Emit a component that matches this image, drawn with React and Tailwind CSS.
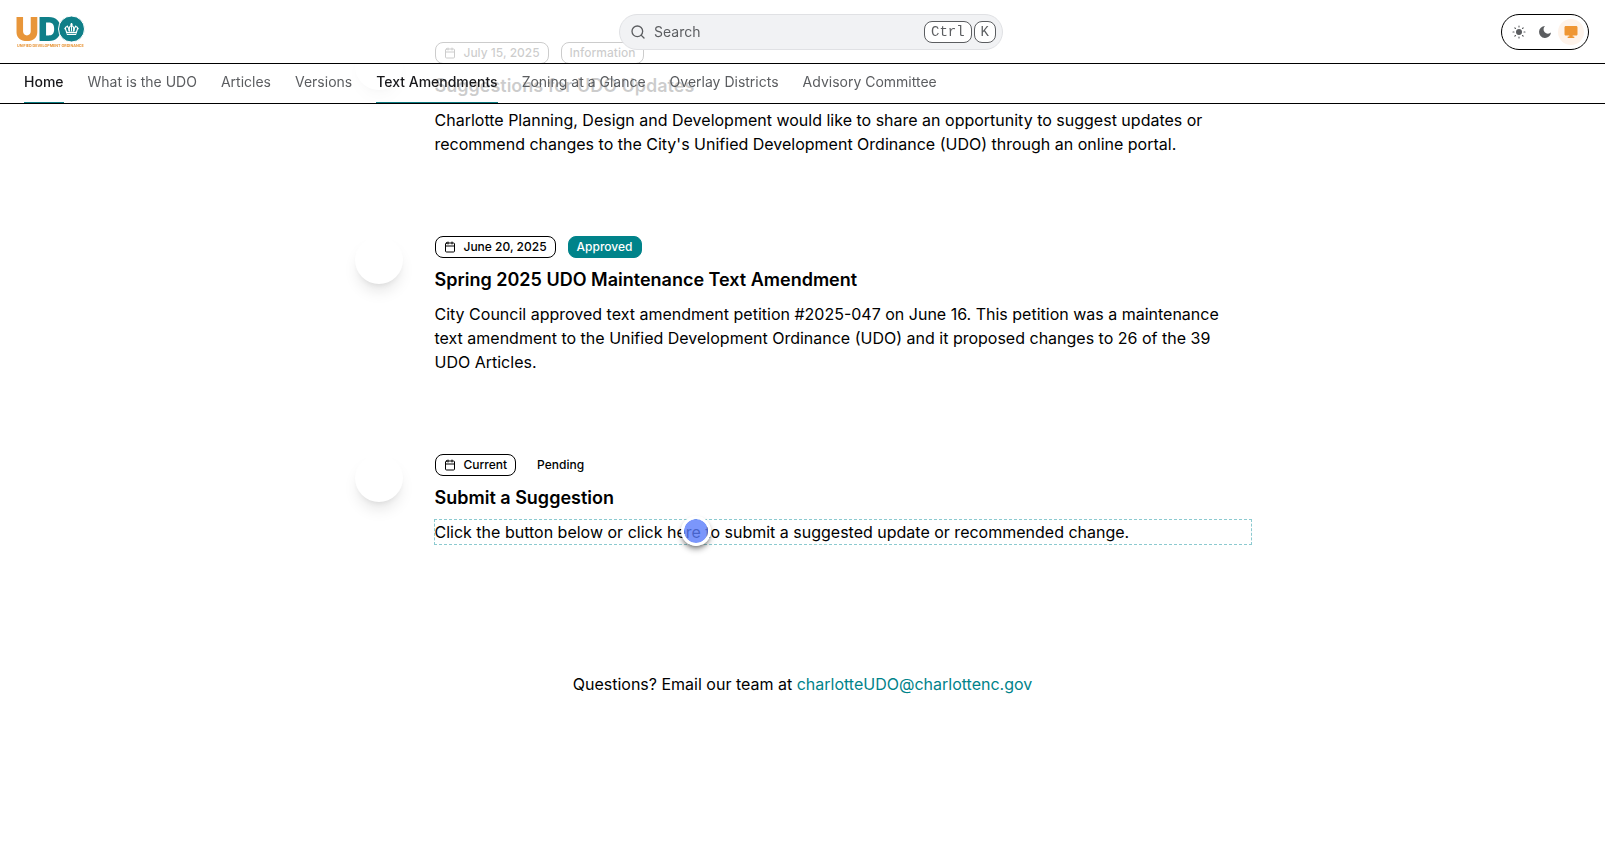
import { Calendar, Search } from "lucide-react";

const links = [
  { label: "Home", active: true },
  { label: "What is the UDO" },
  { label: "Articles" },
  { label: "Versions" },
  { label: "Text Amendments", active: true },
  { label: "Zoning at a Glance" },
  { label: "Overlay Districts" },
  { label: "Advisory Committee" },
];

const badgeStyles = {
  outline: "border-black",
  approved: "border-[#00838a] bg-[#00838a] text-white",
  plain: "border-transparent",
};

const items = [
  {
    date: "July 15, 2025",
    status: "Information",
    tone: "outline",
    title: "Suggestions for UDO Updates",
    text: "Charlotte Planning, Design and Development would like to share an opportunity to suggest updates or recommend changes to the City's Unified Development Ordinance (UDO) through an online portal.",
  },
  {
    date: "June 20, 2025",
    status: "Approved",
    tone: "approved",
    title: "Spring 2025 UDO Maintenance Text Amendment",
    text: "City Council approved text amendment petition #2025-047 on June 16. This petition was a maintenance text amendment to the Unified Development Ordinance (UDO) and it proposed changes to 26 of the 39 UDO\u00a0Articles.",
  },
  {
    date: "Current",
    status: "Pending",
    tone: "plain",
    title: "Submit a Suggestion",
    text: "Click the button below or click here to submit a suggested update or recommended change.",
    selected: true,
  },
];

function Logo() {
  return (
    <svg
      width="70"
      height="32"
      viewBox="0 0 70 32"
      role="img"
      aria-label="UDO Unified Development Ordinance"
      className="overflow-visible"
    >
      <g fontFamily="Inter, sans-serif" fontWeight="900" fontSize="33">
        <text x="-1" y="25" fill="#e8963a">U</text>
        <text x="22" y="25" fill="#0f7f88">D</text>
      </g>
      <circle cx="55.5" cy="13" r="13" fill="#0f7f88" stroke="#fff" strokeWidth="1" />
      <g fill="none" stroke="#fff" strokeWidth="1.1">
        <path d="M51 17.5 L49.4 12.5 C49 10.5 52 10 52.6 12.2 L53 15 M60 17.5 L61.6 12.5 C62 10.5 59 10 58.4 12.2 L58 15" />
        <path d="M53.6 15.5 C52.6 11.5 54 9.6 55.5 9.6 C57 9.6 58.4 11.5 57.4 15.5 M55.5 7 V15.5 M54.2 8.2 H56.8" />
        <path d="M50.4 16.4 H60.6 M50.8 18.4 H60.2" />
      </g>
      <g fill="#fff">
        <circle cx="49.2" cy="12.6" r="0.9" />
        <circle cx="61.8" cy="12.6" r="0.9" />
        <circle cx="51.4" cy="10.4" r="0.8" />
        <circle cx="59.6" cy="10.4" r="0.8" />
      </g>
      <text x="1" y="31" fill="#e8963a" fontFamily="Inter, sans-serif" fontWeight="700" fontSize="3.7">
        UNIFIED DEVELOPMENT ORDINANCE
      </text>
    </svg>
  );
}

function SunIcon() {
  return (
    <svg width="14" height="14" viewBox="0 0 14 14" aria-hidden="true">
      <circle cx="7" cy="7" r="3" fill="#5b5d60" />
      <path
        d="M7 1v1M7 12v1M1 7h1M12 7h1M2.8 2.8l.7.7M10.5 10.5l.7.7M2.8 11.2l.7-.7M10.5 3.5l.7-.7"
        stroke="#5b5d60"
        strokeWidth="1.1"
        strokeLinecap="round"
      />
    </svg>
  );
}

function MoonIcon() {
  return (
    <svg width="14" height="14" viewBox="0 0 14 14" aria-hidden="true">
      <path d="M7 1a6 6 0 1 0 6 6.6A3.9 3.9 0 1 1 7 1z" fill="#5b5d60" />
    </svg>
  );
}

function MonitorIcon() {
  return (
    <svg width="14" height="14" viewBox="0 0 14 14" aria-hidden="true">
      <path
        d="M1.8 1h10.4c.7 0 1.3.6 1.3 1.3v7c0 .7-.6 1.3-1.3 1.3H8.7v.9h1.1c.9 0 .9 1.5 0 1.5H4.2c-.9 0-.9-1.5 0-1.5h1.1v-.9H1.8c-.7 0-1.3-.6-1.3-1.3v-7C.5 1.6 1.1 1 1.8 1z"
        fill="#ef9633"
      />
    </svg>
  );
}

function Badge({ tone, children }) {
  return (
    <span
      className={`inline-flex items-center gap-2 rounded-lg border px-2 py-0.5 text-xs leading-4 font-medium ${badgeStyles[tone]}`}
    >
      {children}
    </span>
  );
}

function TimelineItem({ item }) {
  return (
    <li className="flex gap-8">
      <div className="size-12 shrink-0 rounded-full bg-white shadow-lg" />
      <article className="min-w-0 flex-1">
        <div className="flex h-[22px] gap-3">
          <Badge tone="outline">
            <Calendar size={12} strokeWidth={2} aria-hidden="true" />
            {item.date}
          </Badge>
          <Badge tone={item.tone}>{item.status}</Badge>
        </div>
        <h3 className="mt-2 text-lg leading-7 font-semibold">{item.title}</h3>
        <p
          className={`relative mt-2 text-base leading-6 ${
            item.selected ? "outline outline-dashed outline-[#8ccad0]" : ""
          }`}
        >
          {item.text}
          {item.selected && (
            <span className="absolute -top-1 left-[246px] size-[30px] rounded-full border-3 border-white bg-[#5a7cfa]/80 bg-clip-padding shadow-md shadow-black/40" />
          )}
        </p>
      </article>
    </li>
  );
}

export default function App() {
  return (
    <div className="min-h-screen bg-white font-[Inter,sans-serif] text-black [font-optical-sizing:none]">
      <header className="fixed inset-x-0 top-0 z-10">
        <div className="flex h-16 items-center justify-between border-b border-black bg-white/80 px-4">
          <a href="#home" className="block w-[105px]">
            <Logo />
          </a>
          <button
            type="button"
            className="flex h-9 w-96 items-center gap-2 rounded-full border border-[#e0e1e4] bg-[#f1f2f4] pr-1.5 pl-2.5 text-sm text-[#5b5d60]"
          >
            <Search size={16} aria-hidden="true" />
            <span className="flex-1 text-left">Search</span>
            <span className="flex gap-0.5 font-['Liberation_Mono',monospace] leading-5">
              <kbd className="rounded-lg border border-[#5b5d60] bg-white px-1.5 font-[inherit]">Ctrl</kbd>
              <kbd className="rounded-lg border border-[#5b5d60] bg-white px-1.5 font-[inherit]">K</kbd>
            </span>
          </button>
          <div className="flex h-9 items-center rounded-full border border-black bg-white px-1">
            <button type="button" aria-label="Light theme" className="flex size-[26px] items-center justify-center rounded-full">
              <SunIcon />
            </button>
            <button type="button" aria-label="Dark theme" className="flex size-[26px] items-center justify-center rounded-full">
              <MoonIcon />
            </button>
            <button
              type="button"
              aria-label="System theme"
              className="flex size-[26px] items-center justify-center rounded-full bg-[#fef3ea]"
            >
              <MonitorIcon />
            </button>
          </div>
        </div>
        <nav className="flex h-10 gap-6 border-b border-black bg-white/80 px-6 text-sm">
          {links.map((link) => (
            <a
              key={link.label}
              href="#"
              className={`flex items-center border-b pb-0.5 ${
                link.active ? "border-[#0b7a80] font-medium text-[#18181b]" : "border-transparent text-[#5b5d60]"
              }`}
            >
              {link.label}
            </a>
          ))}
        </nav>
      </header>

      <main className="mx-auto max-w-4xl pt-[42px] pb-32">
        <ol className="flex flex-col gap-20">
          {items.map((item) => (
            <TimelineItem key={item.title} item={item} />
          ))}
        </ol>
        <p className="mt-32 text-center text-base leading-6">
          Questions? Email our team at{" "}
          <a href="mailto:charlotteUDO@charlottenc.gov" className="text-[#00838a]">
            charlotteUDO@charlottenc.gov
          </a>
        </p>
      </main>
    </div>
  );
}
